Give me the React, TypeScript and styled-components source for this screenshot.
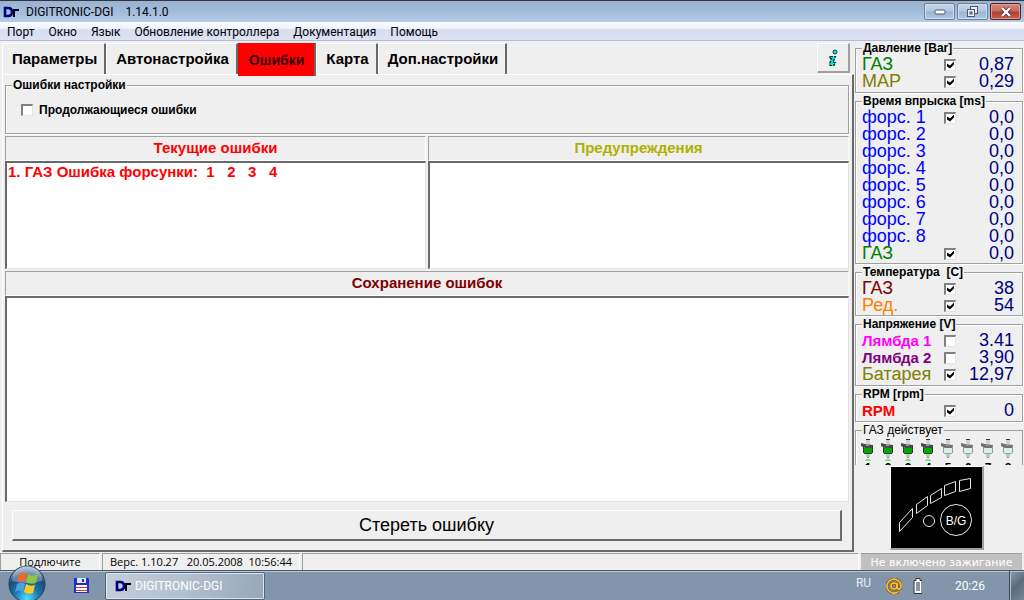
import React from "react";
import styled, { createGlobalStyle } from "styled-components";

const face = "#efefef";
const shade = "#a0a0a0";
const dark = "#696969";
const ui = 'Roboto, "Open Sans", sans-serif';
const sans = '"Liberation Sans", Arial, sans-serif';

const Global = createGlobalStyle`
  * { box-sizing: border-box; }
  body { margin: 0; background: ${face}; font: 12px/14px ${sans}; color: #000; }
  button { font: inherit; color: inherit; padding: 0; }
`;

const Desktop = styled.div`
  display: flex;
  flex-direction: column;
  min-height: 100vh;
`;

const TitleBar = styled.header`
  display: flex;
  align-items: center;
  height: 22px;
  padding: 0 3px;
  border-top: 1px solid #38343c;
  background: linear-gradient(#98b3d2, #a3bddb 55%, #b4cee9);
  font: 12px/20px ${ui};
`;

const Title = styled.h1`
  flex: 1;
  margin: 0 0 0 7px;
  font: inherit;
  white-space: pre;
`;

const WindowButtons = styled.div`
  display: flex;
  gap: 2px;
`;

const WindowButton = styled.button<{ $close?: boolean }>`
  display: grid;
  place-items: center;
  width: 31px;
  height: 17px;
  border: 1px solid ${(p) => (p.$close ? "#5a2028" : "#6a809e")};
  border-radius: 2px;
  box-shadow: inset 0 0 0 1px ${(p) => (p.$close ? "#dc9a90" : "#cfdff0")};
  background: ${(p) =>
    p.$close
      ? "linear-gradient(#d5897c, #c9685a 48%, #b03c2c 52%, #c4604c)"
      : "linear-gradient(#c3d5ea, #b4c9e2 48%, #9bb4d2 52%, #afc8e4)"};
`;

const MenuBar = styled.nav`
  display: flex;
  gap: 14px;
  height: 19px;
  padding: 0 7px;
  border-bottom: 1px solid #b4bcd4;
  background: linear-gradient(#fdfdff, #eef1f9 38%, #d6def0 42%, #dde2f4);
  font: 12px/20px ${ui};
`;

const MenuItem = styled.button`
  border: 0;
  background: none;
`;

const Work = styled.main`
  display: flex;
  flex: 1;
`;

const Pages = styled.section`
  display: flex;
  flex: 1;
  flex-direction: column;
  min-width: 0;
  padding: 2px 0 0 2px;
`;

const TabRow = styled.div`
  display: flex;
  align-items: flex-start;
  height: 31px;
  padding-right: 4px;
`;

const Tab = styled.button<{ $active?: boolean }>`
  position: relative;
  height: 31px;
  padding: 0 7px 0 9px;
  border: 1px solid #fff;
  border-right: 2px solid ${dark};
  border-bottom: 0;
  background: ${face};
  font: bold 15px/28px ${sans};
  ${(p) =>
    p.$active &&
    `
    z-index: 1;
    height: 33px;
    padding: 0 10px;
    border-color: red ${dark} red red;
    background: red;
    color: #300000;
    font-size: 14px;
  `}
`;

const InfoButton = styled.button`
  display: grid;
  place-items: center;
  width: 33px;
  height: 30px;
  margin-left: auto;
  border: solid;
  border-width: 1px 2px 2px 1px;
  border-color: #fff ${shade} ${shade} #fff;
  background: ${face};
`;

const Panel = styled.div`
  display: flex;
  flex: 1;
  flex-direction: column;
  gap: 2px;
  padding: 3px 3px 9px 2px;
  border: solid;
  border-width: 1px 2px 2px 1px;
  border-color: #fff ${dark} ${dark} #fff;
`;

const Group = styled.fieldset<{ $bottom?: number }>`
  min-width: 0;
  margin: 0;
  padding: 1px 8px ${(p) => p.$bottom ?? 1}px 6px;
  border: 1px solid ${shade};
  box-shadow: 1px 1px #fff, inset 1px 1px #fff;
`;

const Legend = styled.legend`
  padding: 0 1px;
  background: ${face};
  font: bold 12px/14px ${sans};
  white-space: pre;
`;

const PlainLegend = styled(Legend)`
  margin-left: 4px;
  font-weight: normal;
`;

const SettingsGroup = styled(Group)`
  height: 56px;
`;

const Option = styled.label`
  display: flex;
  align-items: center;
  gap: 6px;
  padding: 10px 0 0 9px;
  font-weight: bold;
`;

const Check = styled.input`
  appearance: none;
  display: block;
  width: 12px;
  height: 12px;
  margin: 0;
  border: solid;
  border-width: 2px 1px 1px 2px;
  border-color: #808080 #e3e3e3 #e3e3e3 #808080;
  background: #fff;
  &:checked::before {
    content: "";
    display: block;
    width: 7px;
    height: 7px;
    margin: 1px;
    background: #000;
    clip-path: polygon(0 2px, 3px 4px, 7px 0, 7px 3px, 3px 7px, 0 5px);
  }
`;

const Columns = styled.div`
  display: grid;
  grid-template-columns: 1fr 1fr;
  gap: 2px;
`;

const ListBlock = styled.section<{ $grow?: boolean }>`
  display: flex;
  flex-direction: column;
  ${(p) => p.$grow && "flex: 1;"}
`;

const ListTitle = styled.h2<{ $color: string }>`
  margin: 0;
  padding-bottom: 2px;
  border: 1px solid ${shade};
  border-color: ${shade} #fff #fff ${shade};
  color: ${(p) => p.$color};
  font: bold 15px/21px ${sans};
  text-align: center;
`;

const List = styled.ol<{ $grow?: boolean }>`
  min-height: 108px;
  margin: 0;
  padding: 0 1px;
  border: solid;
  border-width: 2px 1px 1px 2px;
  border-color: ${dark} #e3e3e3 #e3e3e3 ${dark};
  background: #fff;
  color: red;
  font: bold 15px/17px ${sans};
  list-style: none;
  white-space: pre;
  ${(p) => p.$grow && "flex: 1;"}
`;

const EraseButton = styled.button`
  height: 31px;
  margin: 6px 7px 0;
  border: solid;
  border-width: 1px 2px 2px 1px;
  border-color: #fff ${dark} ${dark} #fff;
  background: ${face};
  font: 18px/26px ${sans};
`;

const Readings = styled.aside`
  display: flex;
  flex-direction: column;
  gap: 1px;
  width: 170px;
  padding: 0 1px 0 1px;
`;

const Reading = styled.label<{ $color: string; $small?: boolean }>`
  display: grid;
  grid-template-columns: 82px 12px 1fr;
  align-items: center;
  height: 17px;
  color: ${(p) => p.$color};
  font: ${(p) => (p.$small ? "bold 15px" : "18px")}/17px ${sans};
`;

const Value = styled.output`
  grid-column: 3;
  color: #000080;
  font: 18px/17px ${sans};
  text-align: right;
`;

const Injectors = styled(Group)`
  height: 42px;
  padding: 0 4px 0 2px;
  overflow: hidden;
  border-bottom: 0;
  box-shadow: inset 1px 0 #fff;
`;

const InjectorRow = styled.div`
  display: grid;
  grid-template-columns: repeat(8, 1fr);
  height: 28px;
  padding-top: 2px;
  overflow: hidden;
`;

const Injector = styled.div`
  display: flex;
  flex-direction: column;
  align-items: center;
  font: bold 12px/12px ${sans};
  svg { flex: none; }
`;

const Gauge = styled.div`
  align-self: center;
  width: 94px;
  height: 84px;
  margin-right: 4px;
  border: solid;
  border-width: 1px 2px 2px 1px;
  border-color: #fff ${shade} ${shade} #fff;
  background: #000;
  svg { display: block; }
`;

const StatusBar = styled.footer`
  display: flex;
  gap: 2px;
  height: 18px;
  padding: 1px 2px 0 0;
  font: 11px/16px "Open Sans", "Noto Sans", sans-serif;
`;

const StatusCell = styled.span<{ $width?: number }>`
  flex: ${(p) => (p.$width ? `0 0 ${p.$width}px` : "1")};
  border: solid;
  border-width: 1px 1px 0 1px;
  border-color: ${shade} #fff #fff ${shade};
  text-align: center;
  white-space: pre;
`;

const Ignition = styled.span`
  flex: 0 0 161px;
  background: #c0c0c0;
  border-top: 1px solid ${shade};
  color: #fff;
  font: 11px/17px "DejaVu Sans", Verdana, sans-serif;
  text-align: center;
  white-space: nowrap;
`;

const TaskBar = styled.div`
  position: relative;
  display: flex;
  align-items: center;
  height: 30px;
  padding-left: 73px;
  border-top: 1px solid #46566c;
  box-shadow: inset 0 1px #b9c7d8;
  background: #8295ab;
  color: #fff;
  font: 12px/20px ${ui};
`;

const StartButton = styled.button`
  position: absolute;
  left: 8px;
  bottom: 0;
  width: 38px;
  height: 35px;
  overflow: hidden;
  border: 0;
  background: none;
  svg { display: block; }
`;

const IconButton = styled.button`
  width: 17px;
  height: 17px;
  border: 0;
  background: none;
  svg { display: block; }
`;

const TaskButton = styled.button`
  display: flex;
  align-items: center;
  gap: 4px;
  width: 160px;
  height: 28px;
  margin-left: 15px;
  padding-left: 9px;
  border: 1px solid #55657a;
  border-radius: 2px;
  box-shadow: inset 0 0 0 1px #dde5ee;
  background: linear-gradient(100deg, #c3ced9, #b2bfcd 50%, #97a7b9);
`;

const Tray = styled.div`
  display: flex;
  align-items: center;
  align-self: stretch;
  margin-left: auto;
  svg { flex: none; }
`;

const Language = styled.span`
  margin-right: 15px;
  padding-bottom: 5px;
  color: #e4ebf3;
`;

const Clock = styled.time`
  margin: 0 24px 0 33px;
`;

const ShowDesktop = styled.button`
  align-self: stretch;
  width: 15px;
  border: 1px solid #3b4a5e;
  border-width: 0 0 0 1px;
  box-shadow: inset 1px 1px #b0bdcc;
  background: linear-gradient(135deg, #8c9bad, #5d6b7d 50%, #77869a);
`;

const Logo = () => (
  <svg width="16" height="12" viewBox="0 0 16 12" aria-hidden="true">
    <path d="M2 2h3q4 0 4 4t-4 4H2z" fill="none" stroke="#000080" strokeWidth="2.6" />
    <path d="M10 4h6M11 3v8" fill="none" stroke="#000" strokeWidth="2" />
  </svg>
);

const InfoIcon = () => (
  <svg width="12" height="18" viewBox="0 0 12 18" aria-hidden="true">
    <circle cx="8" cy="3" r="2" fill="#00e5e5" stroke="#004848" />
    <path
      d="M3 7.500h5.500L6 13.500h2.500L7 16.500H3L2.500 15 4.500 9.500H2.500z"
      fill="#00e5e5"
      stroke="#003030"
      strokeWidth="1.200"
      strokeDasharray="3 1"
    />
  </svg>
);

const InjectorIcon = ({ on }: { on: boolean }) => (
  <svg width="14" height="23" viewBox="0 0 14 23" aria-hidden="true">
    <path d="M5 0h4v1H5z" fill="#333" />
    <rect x="5" y="1" width="4" height="4" fill="#d0d0d0" />
    <path d="M0 4l4 1 8 1v3H4L0 7z" fill={on ? "#4a4a4a" : "#6c7474"} />
    <path d="M5 5h3v2H5z" fill="#999" />
    <rect x="3" y="9" width="8" height="5" fill={on ? "#00a800" : "#d9f0ea"} />
    <path d="M2.500 8v6M11.500 7v7" stroke={on ? "#303830" : "#909c98"} />
    <path d="M3 14h8v1H3z" fill={on ? "#304030" : "#9aa6a2"} />
    <path d="M5 15h4v3H5z" fill="#c4c4c4" />
    <path d="M6 18h2v1H6z" fill="#888" />
    {on && <path d="M5 20.500h4M4 21.500h6" stroke="#6fe880" />}
  </svg>
);

const GaugeDrawing = () => (
  <svg width="91" height="81" viewBox="0 0 91 81" aria-label="B/G">
    <g fill="none" stroke="#e8e8e8">
      <path d="M8.500 55.500l13-14v9l-13 14z" />
      <path d="M25.500 37.500l11-8v9l-11 8z" />
      <path d="M39.500 28.500l11-7v9l-11 6z" />
      <path d="M53.500 18.500l11-4v10l-11 4z" />
      <path d="M68.500 13.500l11-2v10l-11 3z" />
      <circle cx="38" cy="54" r="5.500" />
      <circle cx="65" cy="53" r="15.500" />
    </g>
    <text x="65" y="58" fill="#fff" fontFamily="Liberation Sans" fontSize="12" textAnchor="middle">
      B/G
    </text>
  </svg>
);

const StartOrb = () => (
  <svg width="38" height="38" viewBox="0 0 38 38" aria-hidden="true">
    <defs>
      <radialGradient id="orb" cx="50%" cy="90%" r="85%">
        <stop offset="0" stopColor="#4fe0ff" />
        <stop offset="0.4" stopColor="#1c77ae" />
        <stop offset="0.75" stopColor="#1c4a78" />
        <stop offset="1" stopColor="#8fb0cc" />
      </radialGradient>
    </defs>
    <circle cx="19" cy="19" r="18" fill="url(#orb)" stroke="#23405f" />
    <path d="M4 16A15 15 0 0 1 34 16Q19 20 4 16z" fill="#fff" opacity="0.3" />
    <path d="M11 9q4-3 8 0l-2 8q-4-2-8 0z" fill="#ee6a2c" />
    <path d="M20 9q4 3 10 0l-2 9q-5 2-10-1z" fill="#8ec63f" />
    <path d="M9 19q4-3 8 0l-2 8q-4-3-8 0z" fill="#4a9fe0" />
    <path d="M18 19q5 3 9 1l-2 8q-5 2-9-1z" fill="#fcc927" />
  </svg>
);

const SaveIcon = () => (
  <svg width="17" height="17" viewBox="0 0 17 17" aria-hidden="true">
    <path d="M1 1h14l1 1v14H1z" fill="#1c30d0" />
    <path d="M4 1h9v5H4z" fill="#dfe6f4" />
    <path d="M9 2h2v3H9z" fill="#1c30d0" />
    <path d="M3 8h11v7H3z" fill="#fff" />
    <path d="M3 10.500h11M3 13.500h11" stroke="#e03030" />
  </svg>
);

type Row = { name: string; color: string; value: string; checked?: boolean; small?: boolean };

const injection: Row[] = [1, 2, 3, 4, 5, 6, 7, 8].map((n) => ({
  name: `форс. ${n}`,
  color: "#0000ff",
  value: "0,0",
  checked: n === 1 ? true : undefined,
}));

const groups: { title: string; rows: Row[]; bottom?: number }[] = [
  {
    title: "Давление [Bar]",
    bottom: 2,
    rows: [
      { name: "ГАЗ", color: "#008000", value: "0,87", checked: true },
      { name: "МАР", color: "#808000", value: "0,29", checked: true },
    ],
  },
  {
    title: "Время впрыска [ms]",
    rows: [...injection, { name: "ГАЗ", color: "#008000", value: "0,0", checked: true }],
  },
  {
    title: "Температура  [C]",
    rows: [
      { name: "ГАЗ", color: "#800000", value: "38", checked: true },
      { name: "Ред.", color: "#ff8000", value: "54", checked: true },
    ],
  },
  {
    title: "Напряжение [V]",
    bottom: 2,
    rows: [
      { name: "Лямбда 1", color: "#ff00ff", value: "3.41", checked: false, small: true },
      { name: "Лямбда 2", color: "#800080", value: "3,90", checked: false, small: true },
      { name: "Батарея", color: "#808000", value: "12,97", checked: true },
    ],
  },
  {
    title: "RPM [rpm]",
    bottom: 2,
    rows: [{ name: "RPM", color: "#ff0000", value: "0", checked: true, small: true }],
  },
];

const menu = ["Порт", "Окно", "Язык", "Обновление контроллера", "Документация", "Помощь"];
const tabs = ["Параметры", "Автонастройка", "Ошибки", "Карта", "Доп.настройки"];

export default function App() {
  return (
    <Desktop>
      <Global />
      <TitleBar>
        <Logo />
        <Title>{"DIGITRONIC-DGI    1.14.1.0"}</Title>
        <WindowButtons>
          <WindowButton aria-label="Свернуть">
            <svg width="12" height="6"><rect x="1" y="1" width="10" height="4" rx="1" fill="#fff" stroke="#4c5a6c" /></svg>
          </WindowButton>
          <WindowButton aria-label="Восстановить">
            <svg width="13" height="12" fill="#e9eff6" stroke="#4c5a6c">
              <rect x="4.500" y="0.500" width="7" height="7" />
              <rect x="1.500" y="3.500" width="7" height="7" />
              <rect x="4" y="6" width="2" height="2" fill="#9bb4d2" />
            </svg>
          </WindowButton>
          <WindowButton $close aria-label="Закрыть">
            <svg width="12" height="10" fill="none">
              <path d="M2 1l8 8M10 1L2 9" stroke="#5a3038" strokeWidth="4" />
              <path d="M2 1l8 8M10 1L2 9" stroke="#fff" strokeWidth="2.400" />
            </svg>
          </WindowButton>
        </WindowButtons>
      </TitleBar>
      <MenuBar>
        {menu.map((item) => (
          <MenuItem key={item}>{item}</MenuItem>
        ))}
      </MenuBar>
      <Work>
        <Pages>
          <TabRow role="tablist">
            {tabs.map((tab) => (
              <Tab key={tab} role="tab" $active={tab === "Ошибки"} aria-selected={tab === "Ошибки"}>
                {tab}
              </Tab>
            ))}
            <InfoButton aria-label="Информация">
              <InfoIcon />
            </InfoButton>
          </TabRow>
          <Panel>
            <SettingsGroup>
              <Legend>Ошибки настройки</Legend>
              <Option>
                <Check type="checkbox" />
                Продолжающиеся ошибки
              </Option>
            </SettingsGroup>
            <Columns>
              <ListBlock>
                <ListTitle $color="#ff0000">Текущие ошибки</ListTitle>
                <List>
                  <li>{"1. ГАЗ Ошибка форсунки:  1   2   3   4"}</li>
                </List>
              </ListBlock>
              <ListBlock>
                <ListTitle $color="#b0b000">Предупреждения</ListTitle>
                <List />
              </ListBlock>
            </Columns>
            <ListBlock $grow>
              <ListTitle $color="#800000">Сохранение ошибок</ListTitle>
              <List $grow />
            </ListBlock>
            <EraseButton>Стереть ошибку</EraseButton>
          </Panel>
        </Pages>
        <Readings>
          {groups.map((group) => (
            <Group key={group.title} $bottom={group.bottom}>
              <Legend>{group.title}</Legend>
              {group.rows.map((row) => (
                <Reading key={row.name} $color={row.color} $small={row.small}>
                  {row.name}
                  {row.checked !== undefined && <Check type="checkbox" defaultChecked={row.checked} />}
                  <Value>{row.value}</Value>
                </Reading>
              ))}
            </Group>
          ))}
          <Injectors>
            <PlainLegend>ГАЗ действует</PlainLegend>
            <InjectorRow>
              {[1, 2, 3, 4, 5, 6, 7, 8].map((n) => (
                <Injector key={n}>
                  <InjectorIcon on={n <= 4} />
                  {n}
                </Injector>
              ))}
            </InjectorRow>
          </Injectors>
          <Gauge>
            <GaugeDrawing />
          </Gauge>
        </Readings>
      </Work>
      <StatusBar>
        <StatusCell $width={100}>Подлючите</StatusCell>
        <StatusCell $width={198}>{"Верс. 1.10.27   20.05.2008  10:56:44"}</StatusCell>
        <StatusCell />
        <Ignition>Не включено зажигание</Ignition>
      </StatusBar>
      <TaskBar>
        <StartButton aria-label="Пуск">
          <StartOrb />
        </StartButton>
        <IconButton aria-label="Сохранить">
          <SaveIcon />
        </IconButton>
        <TaskButton>
          <Logo />
          DIGITRONIC-DGI
        </TaskButton>
        <Tray>
          <Language>RU</Language>
          <svg width="16" height="16" viewBox="0 0 16 16" fill="none" aria-hidden="true">
            <path d="M12.500 13.500A7 7 0 1 1 15 8c0 4-4 4-4 1V5" stroke="#7c5410" strokeWidth="3" />
            <circle cx="8" cy="8" r="3" stroke="#7c5410" strokeWidth="3" />
            <path d="M12.500 13.500A7 7 0 1 1 15 8c0 4-4 4-4 1V5" stroke="#ffc038" strokeWidth="1.600" />
            <circle cx="8" cy="8" r="3" stroke="#ffc038" strokeWidth="1.600" />
          </svg>
          <svg width="20" height="16" viewBox="0 0 20 16" aria-hidden="true">
            <path d="M14 0.500h4v2h2v13h-8v-13h2z" fill="#fff" stroke="#333" />
            <rect x="14" y="4" width="4" height="9" fill="#8295ab" />
          </svg>
          <Clock>20:26</Clock>
          <ShowDesktop aria-label="Показать рабочий стол" />
        </Tray>
      </TaskBar>
    </Desktop>
  );
}
